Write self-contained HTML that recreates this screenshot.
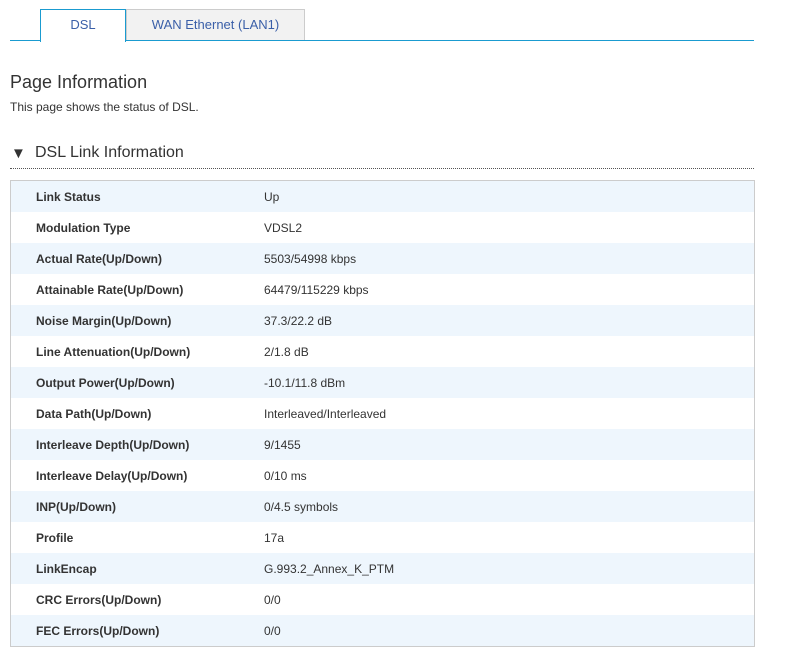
<!DOCTYPE html>
<html><head><style>
body{margin:0;background:#fff;font-family:"Liberation Sans",Arial,sans-serif;color:#333;width:788px;height:664px;overflow:hidden;position:relative}
.a{position:absolute}
.tabline{left:10px;top:40px;width:744px;height:1px;background:#1a9bd0}
.t1{left:40px;top:9px;width:84px;height:32px;border:1px solid #1a9bd0;border-bottom:none;background:#fff;color:#3a5fa8;font-size:13px;text-align:center;line-height:30px}
.t2{left:126px;top:9px;width:177px;height:30px;border:1px solid #ccc;border-bottom:none;background:#f2f2f2;color:#3a5fa8;font-size:13px;text-align:center;line-height:30px}
table{position:absolute;left:10px;top:180px;width:745px;border:1px solid #ccc;border-collapse:collapse;font-size:12px}
td{height:31px;padding:0;color:#333}
td.l{padding-left:25px;width:228px;font-weight:bold}
tr:nth-child(odd) td{background:#eef6fd}
</style></head><body>
<div class="a tabline"></div>
<div class="a t1">DSL</div>
<div class="a t2">WAN Ethernet (LAN1)</div>
<div class="a" style="left:10px;top:72px;font-size:18px;color:#333">Page Information</div>
<div class="a" style="left:10px;top:100px;font-size:12px;color:#333">This page shows the status of DSL.</div>
<div class="a" style="left:11px;top:145px;font-size:15px;color:#333">▼</div>
<div class="a" style="left:35px;top:144px;font-size:16px;color:#333">DSL Link Information</div>
<div class="a" style="left:10px;top:168px;width:744px;border-top:1px dotted #555"></div>
<table>
<tr><td class="l">Link Status</td><td>Up</td></tr>
<tr><td class="l">Modulation Type</td><td>VDSL2</td></tr>
<tr><td class="l">Actual Rate(Up/Down)</td><td>5503/54998 kbps</td></tr>
<tr><td class="l">Attainable Rate(Up/Down)</td><td>64479/115229 kbps</td></tr>
<tr><td class="l">Noise Margin(Up/Down)</td><td>37.3/22.2 dB</td></tr>
<tr><td class="l">Line Attenuation(Up/Down)</td><td>2/1.8 dB</td></tr>
<tr><td class="l">Output Power(Up/Down)</td><td>-10.1/11.8 dBm</td></tr>
<tr><td class="l">Data Path(Up/Down)</td><td>Interleaved/Interleaved</td></tr>
<tr><td class="l">Interleave Depth(Up/Down)</td><td>9/1455</td></tr>
<tr><td class="l">Interleave Delay(Up/Down)</td><td>0/10 ms</td></tr>
<tr><td class="l">INP(Up/Down)</td><td>0/4.5 symbols</td></tr>
<tr><td class="l">Profile</td><td>17a</td></tr>
<tr><td class="l">LinkEncap</td><td>G.993.2_Annex_K_PTM</td></tr>
<tr><td class="l">CRC Errors(Up/Down)</td><td>0/0</td></tr>
<tr><td class="l">FEC Errors(Up/Down)</td><td>0/0</td></tr>
</table>
</body></html>
